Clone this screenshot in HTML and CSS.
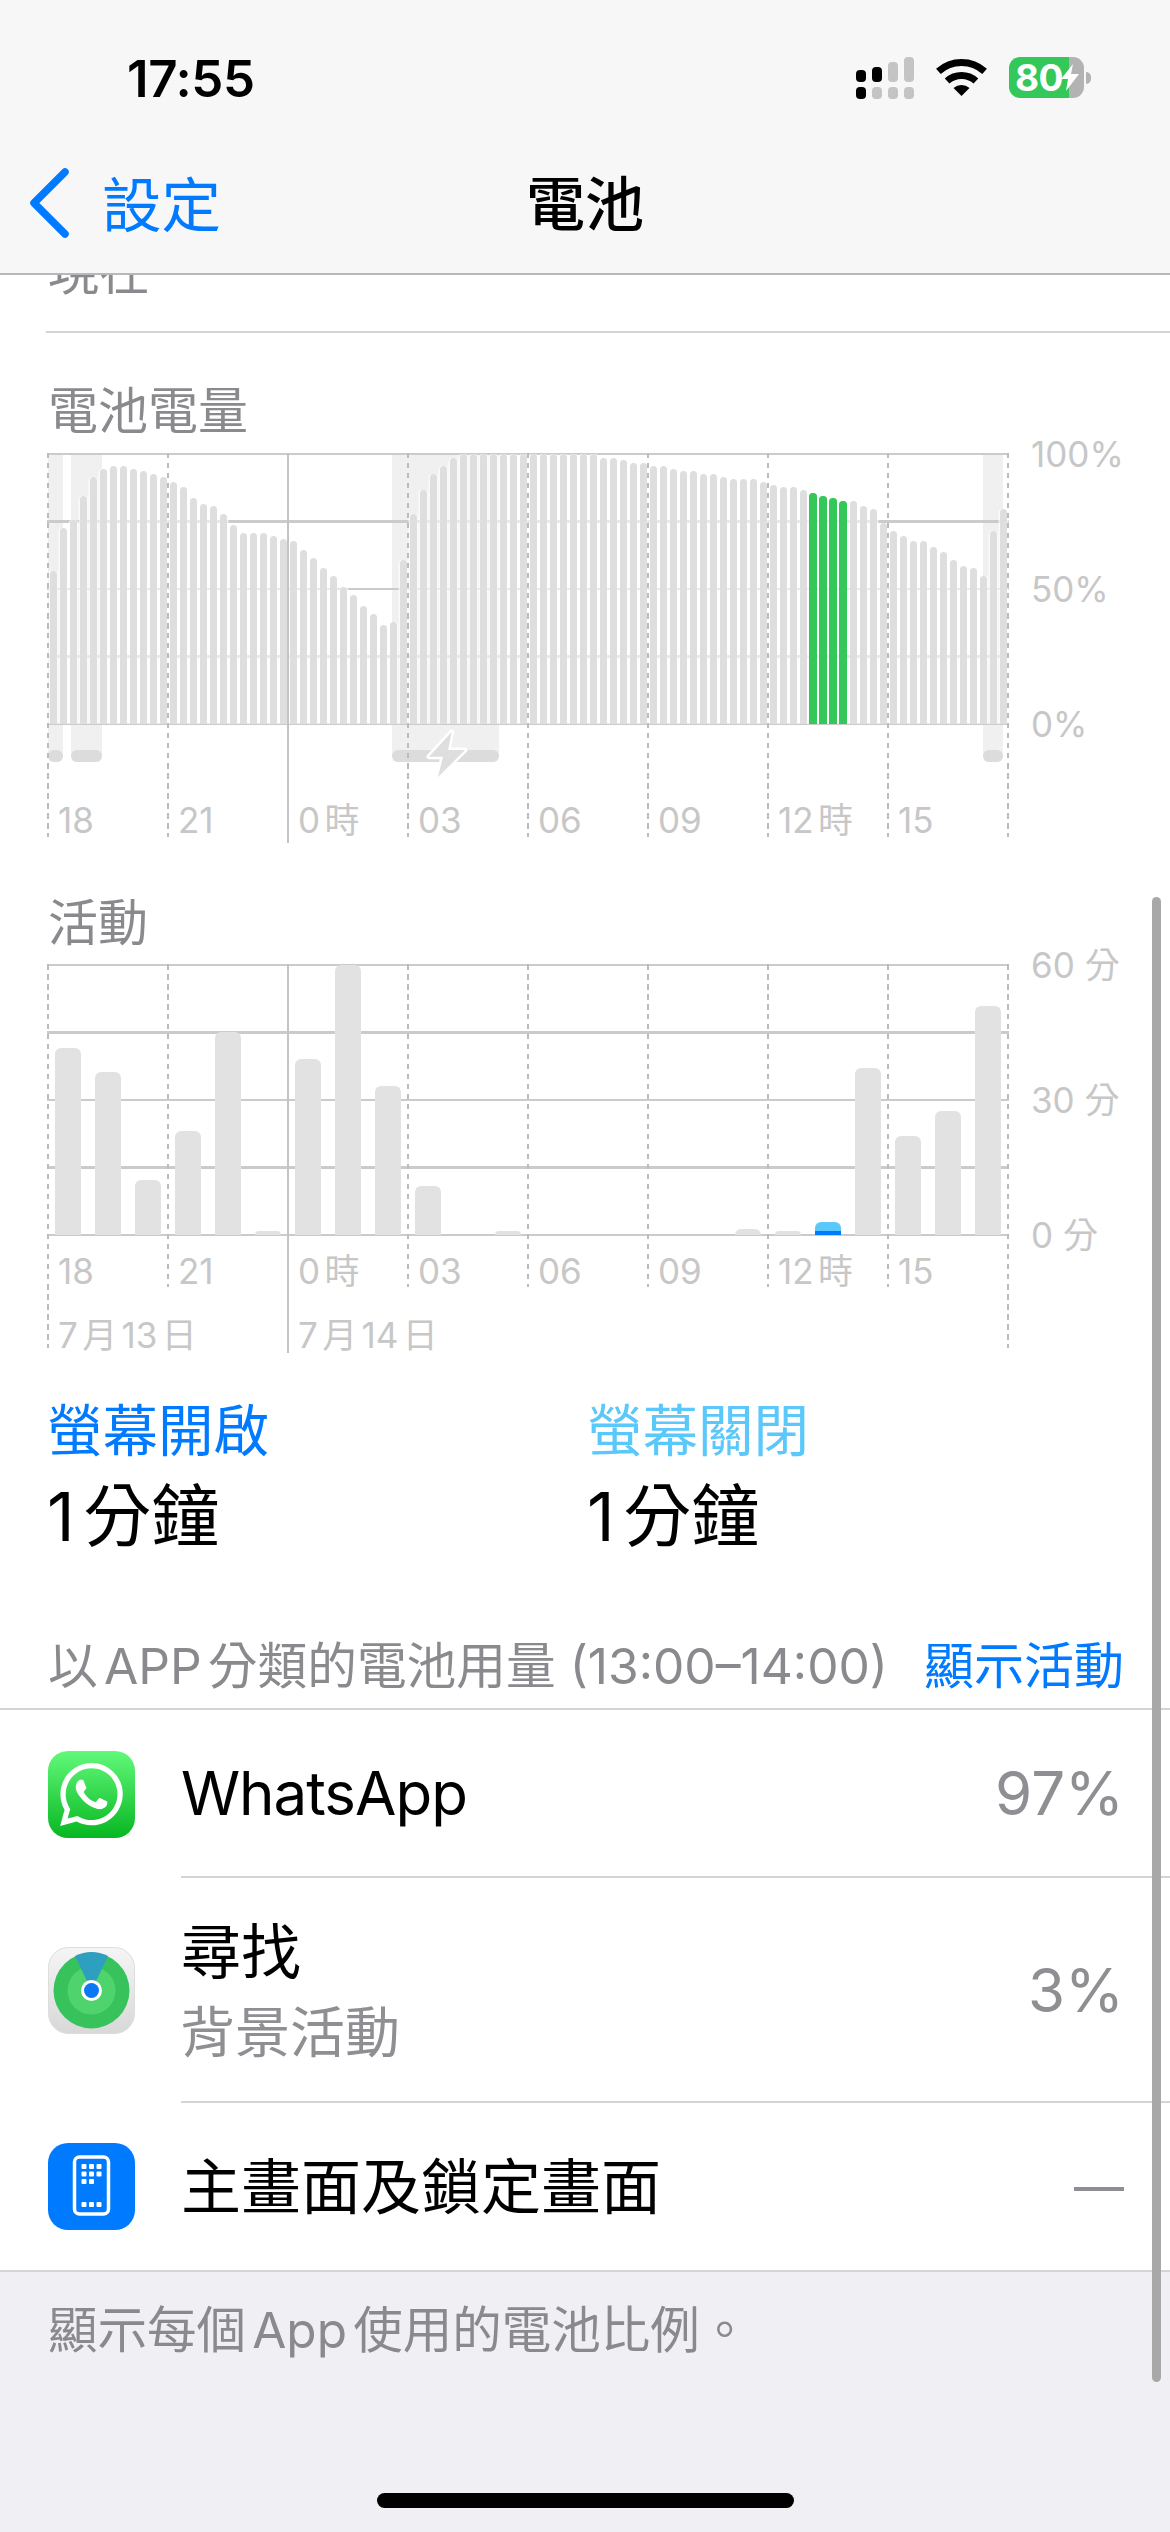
FILE: index.html
```html
<!DOCTYPE html>
<html lang="zh-Hant">
<head>
<meta charset="utf-8">
<title>電池</title>
<link rel="stylesheet" href="styles.css">
</head>
<body>
<div class="screen">

  <header class="top">
    <div class="status">
      <span class="clock">17:55</span>
      <div class="status-icons">
        <div class="signal">
          <div class="signal-col"><i class="on s1"></i><i class="on dot"></i></div>
          <div class="signal-col"><i class="on s2"></i><i class="dot"></i></div>
          <div class="signal-col"><i class="s3"></i><i class="dot"></i></div>
          <div class="signal-col"><i class="s4"></i><i class="dot"></i></div>
        </div>
        <svg class="wifi" width="51" height="37" viewBox="0 0 51 37">
          <path d="M2.4 12.4A34.5 34.5 0 0 1 48.6 12.4" fill="none" stroke="#000" stroke-width="7"/>
          <path d="M11.1 22A21.5 21.5 0 0 1 39.9 22" fill="none" stroke="#000" stroke-width="7"/>
          <path d="M25.5 37L17.5 29A12 12 0 0 1 33.5 29Z" fill="#000"/>
        </svg>
        <div class="battery">
          <div class="battery-body">
            <span class="battery-num">80</span>
            <svg class="battery-bolt" width="18" height="27" viewBox="0 0 18 27"><path d="M12 0L0 15h7L5 27 18 10h-8z" fill="#fff"/></svg>
          </div>
          <div class="battery-nub"></div>
        </div>
      </div>
    </div>
    <nav class="navbar">
      <a class="back">
        <svg width="39" height="70" viewBox="0 0 39 70"><path d="M35 4L4 35l31 31" fill="none" stroke="#007aff" stroke-width="7.5" stroke-linecap="round" stroke-linejoin="round"/></svg>
        <span>設定</span>
      </a>
      <h1 class="nav-title">電池</h1>
    </nav>
  </header>

  <main>
    <div class="now-row">現在</div>

    <h2 class="chart-title first">電池電量</h2>
    <div class="chart chart-level">
      <div class="bands" id="level-bands"></div>
      <div class="plot"><div class="bars" id="level-bars"></div></div>
      <div class="ticks">
        <div class="tick"><span class="tick-label">18</span></div>
        <div class="tick"><span class="tick-label">21</span></div>
        <div class="tick tick-day"><span class="tick-label">0時</span></div>
        <div class="tick"><span class="tick-label">03</span></div>
        <div class="tick"><span class="tick-label">06</span></div>
        <div class="tick"><span class="tick-label">09</span></div>
        <div class="tick"><span class="tick-label">12時</span></div>
        <div class="tick"><span class="tick-label">15</span></div>
        <div class="tick tick-end"></div>
      </div>
      <div class="y-axis"><span>100%</span><span>50%</span><span>0%</span></div>
      <svg class="charge-bolt" width="44" height="56" viewBox="0 0 44 56"><path d="M27.7 5L5 29.7h14L14 50l27-27H24z" fill="#dedede" stroke="#fff" stroke-width="5" stroke-linejoin="round" paint-order="stroke"/></svg>
    </div>

    <h2 class="chart-title second">活動</h2>
    <div class="chart chart-activity">
      <div class="plot"><div class="bars" id="activity-bars"></div></div>
      <div class="ticks">
        <div class="tick tick-long"><span class="tick-label">18</span><span class="date-label">7月13日</span></div>
        <div class="tick"><span class="tick-label">21</span></div>
        <div class="tick tick-day"><span class="tick-label">0時</span><span class="date-label">7月14日</span></div>
        <div class="tick"><span class="tick-label">03</span></div>
        <div class="tick"><span class="tick-label">06</span></div>
        <div class="tick"><span class="tick-label">09</span></div>
        <div class="tick"><span class="tick-label">12時</span></div>
        <div class="tick"><span class="tick-label">15</span></div>
        <div class="tick tick-end tick-long"></div>
      </div>
      <div class="y-axis"><span>60 分</span><span>30 分</span><span>0 分</span></div>
    </div>

    <section class="screen-time">
      <div class="time-col">
        <div class="time-name on">螢幕開啟</div>
        <div class="time-value">1分鐘</div>
      </div>
      <div class="time-col">
        <div class="time-name off">螢幕關閉</div>
        <div class="time-value">1分鐘</div>
      </div>
    </section>

    <div class="usage-head">
      <span>以APP分類的電池用量 (13:00–14:00)</span>
      <a class="usage-link">顯示活動</a>
    </div>

    <ul class="apps">
      <li class="app app-whatsapp">
        <svg class="app-icon" width="87" height="87" viewBox="0 0 87 87">
          <defs><linearGradient id="wa" x1="0" y1="0" x2="0" y2="1"><stop offset="0" stop-color="#62f97b"/><stop offset="1" stop-color="#07b721"/></linearGradient></defs>
          <rect width="87" height="87" rx="20" fill="url(#wa)"/>
          <path transform="translate(12 12) scale(2.62)" fill="#fff" d="M17.472 14.382c-.297-.149-1.758-.867-2.03-.967-.273-.099-.471-.148-.67.15-.197.297-.767.966-.94 1.164-.173.199-.347.223-.644.075-.297-.15-1.255-.463-2.39-1.475-.883-.788-1.48-1.761-1.653-2.059-.173-.297-.018-.458.13-.606.134-.133.298-.347.446-.52.149-.174.198-.298.298-.497.099-.198.05-.371-.025-.52-.075-.149-.669-1.612-.916-2.207-.242-.579-.487-.5-.669-.51-.173-.008-.371-.01-.57-.01-.198 0-.52.074-.792.372-.272.297-1.04 1.016-1.04 2.479 0 1.462 1.065 2.875 1.213 3.074.149.198 2.096 3.2 5.077 4.487.709.306 1.262.489 1.694.625.712.227 1.36.195 1.871.118.571-.085 1.758-.719 2.006-1.413.248-.694.248-1.289.173-1.413-.074-.124-.272-.198-.57-.347m-5.421 7.403h-.004a9.87 9.87 0 01-5.031-1.378l-.361-.214-3.741.982.998-3.648-.235-.374a9.86 9.86 0 01-1.51-5.26c.001-5.45 4.436-9.884 9.888-9.884 2.64 0 5.122 1.03 6.988 2.898a9.825 9.825 0 012.893 6.994c-.003 5.45-4.437 9.884-9.885 9.884m8.413-18.297A11.815 11.815 0 0012.05 0C5.495 0 .16 5.335.157 11.892c0 2.096.547 4.142 1.588 5.945L.057 24l6.305-1.654a11.882 11.882 0 005.683 1.448h.005c6.554 0 11.89-5.335 11.893-11.893a11.821 11.821 0 00-3.48-8.413z"/>
        </svg>
        <div class="app-body">
          <div class="app-name latin">WhatsApp</div>
          <div class="app-pct">97%</div>
        </div>
      </li>
      <li class="app app-find">
        <svg class="app-icon" width="87" height="87" viewBox="0 0 87 87">
          <defs><linearGradient id="fm" x1="0" y1="0" x2="0" y2="1"><stop offset="0" stop-color="#f5f5f5"/><stop offset="1" stop-color="#d8d8d8"/></linearGradient></defs>
          <rect x=".5" y=".5" width="86" height="86" rx="20" fill="url(#fm)" stroke="#ddd"/>
          <circle cx="43.5" cy="43.5" r="38" fill="#38c25c"/>
          <circle cx="43.5" cy="43.5" r="24" fill="#4fd36c"/>
          <path d="M27 9A38 38 0 0 1 60 9L43.5 43.5Z" fill="#2f9fc0"/>
          <circle cx="43.5" cy="43.5" r="10.5" fill="#fff"/>
          <circle cx="43.5" cy="43.5" r="7.5" fill="#0a78f5"/>
        </svg>
        <div class="app-body">
          <div class="app-text">
            <div class="app-name">尋找</div>
            <div class="app-sub">背景活動</div>
          </div>
          <div class="app-pct">3%</div>
        </div>
      </li>
      <li class="app app-home">
        <svg class="app-icon" width="87" height="87" viewBox="0 0 87 87">
          <rect width="87" height="87" rx="20" fill="#007aff"/>
          <rect x="26.5" y="14" width="34" height="57" rx="5" fill="none" stroke="#fff" stroke-width="3.5"/>
          <g fill="#fff">
            <rect x="33.5" y="21" width="5" height="5" rx="1"/><rect x="41" y="21" width="5" height="5" rx="1"/><rect x="48.5" y="21" width="5" height="5" rx="1"/>
            <rect x="33.5" y="28.5" width="5" height="5" rx="1"/><rect x="41" y="28.5" width="5" height="5" rx="1"/><rect x="48.5" y="28.5" width="5" height="5" rx="1"/>
            <rect x="33.5" y="36" width="5" height="5" rx="1"/><rect x="41" y="36" width="5" height="5" rx="1"/>
            <rect x="33.5" y="59" width="5" height="5" rx="1"/><rect x="41" y="59" width="5" height="5" rx="1"/><rect x="48.5" y="59" width="5" height="5" rx="1"/>
          </g>
        </svg>
        <div class="app-body">
          <div class="app-name">主畫面及鎖定畫面</div>
          <div class="app-pct app-dash">—</div>
        </div>
      </li>
    </ul>

    <footer class="note">顯示每個App使用的電池比例。</footer>
  </main>

  <div class="scrollbar"></div>
  <div class="home-bar"></div>
</div>
<script src="charts.js"></script>
</body>
</html>
```

FILE: styles.css
```css
* { box-sizing: border-box; }

html, body { margin: 0; padding: 0; }

body {
  width: 1170px;
  height: 2532px;
  overflow: hidden;
  background: #fff;
  color: #000;
  font-family: Inter, "Noto Sans CJK TC", sans-serif;
  text-autospace: normal;
}

.screen { position: relative; width: 1170px; height: 2532px; overflow: hidden; display: flex; flex-direction: column; }

h1, h2, ul { margin: 0; padding: 0; font-weight: 400; }
ul { list-style: none; }

/* top bar */
.top {
  position: relative;
  z-index: 5;
  height: 275px;
  flex: none;
  background: #f7f7f7;
  border-bottom: 2px solid #b8b8b8;
}

.status {
  height: 157px;
  padding: 56px 79px 0 127px;
  display: flex;
  justify-content: space-between;
  align-items: flex-start;
}

.clock { font-size: 51px; font-weight: 600; line-height: 46px; letter-spacing: -.4px; }

.status-icons { display: flex; align-items: flex-start; }

.signal { display: flex; gap: 6.3px; width: 58px; height: 42px; margin-top: 1px; margin-right: 22px; align-items: flex-end; }
.signal-col { display: flex; flex-direction: column; gap: 5px; width: 10px; }
.signal-col i { display: block; background: #c4c4c4; border-radius: 4px; }
.signal-col i.on { background: #000; }
.signal-col .dot { height: 11.6px; }
.signal-col .s1 { height: 12px; }
.signal-col .s2 { height: 15px; }
.signal-col .s3 { height: 20px; }
.signal-col .s4 { height: 25px; }

.wifi { margin-top: 3px; margin-right: 22px; }

.battery { display: flex; align-items: center; height: 41px; margin-top: 1px; }
.battery-body {
  width: 75px;
  height: 41px;
  border-radius: 11px;
  background: linear-gradient(to right, #34c759 0 60px, #b3b3b3 60px);
  display: flex;
  align-items: center;
  padding-left: 6px;
}
.battery-num { color: #fff; font-size: 37px; font-weight: 700; line-height: 41px; letter-spacing: -.5px; width: 46px; }
.battery-bolt { flex: none; }
.battery-nub { width: 5px; height: 12px; margin-left: 2px; background: #b3b3b3; border-radius: 0 6px 6px 0; }

.navbar { position: relative; height: 116px; display: flex; align-items: flex-start; }

.back { display: flex; align-items: flex-start; color: #007aff; font-size: 59.5px; line-height: 70px; padding: 11px 0 0 30px; }
.back span { margin-left: 33px; margin-top: 2px; }

.nav-title {
  position: absolute;
  left: 0;
  right: 0;
  top: 13px;
  text-align: center;
  font-size: 59px;
  line-height: 70px;
  font-weight: 500;
}

/* scrolled row under the bar */
main { flex: 1; display: flex; flex-direction: column; }

.now-row {
  height: 110px;
  margin: -52px 0 0 46px;
  padding: 0 0 29px 2px;
  display: flex;
  align-items: flex-end;
  border-bottom: 2px solid #d4d4d6;
  color: #8a8a8e;
  font-size: 51px;
  line-height: 60px;
}

/* charts */
.chart-title { margin-left: 48px; font-size: 50px; line-height: 60px; color: #8a8a8e; }
.chart-title.first { margin-top: 48px; margin-bottom: 12px; }
.chart-title.second { margin-top: 50px; margin-bottom: 11px; }

.chart { position: relative; margin-left: 47px; width: 1100px; }
.chart-level { height: 390px; }
.chart-activity { height: 389px; }

.plot {
  position: relative;
  width: 962px;
  height: 272px;
  background: repeating-linear-gradient(to bottom, #cbcbcb 0 2px, transparent 2px 67.5px);
}

.bars { display: flex; align-items: flex-end; position: absolute; left: 1px; bottom: 1px; height: 270px; }
.bar-cell { display: flex; align-items: flex-end; justify-content: center; height: 100%; }
.chart-level .bar-cell { width: 10px; }
.chart-activity .bar-cell { width: 40px; }

.bar { display: flex; flex-direction: column; justify-content: flex-end; background: #dedede; }
/* the slim gaps between level bars wash out the grid lines behind them */
.chart-level .bar {
  width: 7px;
  border-radius: 3.5px 3.5px 0 0;
  box-shadow: 1.5px 0 0 rgba(255, 255, 255, .65), -1.5px 0 0 rgba(255, 255, 255, .65);
}
.chart-level .bar.current { width: 8px; background: #34c759; }
.chart-activity .bar { width: 26px; border-radius: 6px 6px 0 0; background: #e2e2e2; overflow: hidden; }
.chart-activity .bar.current { background: #5ac8fa; }
.bar-on { display: block; background: #007aff; }

/* charging periods */
.bands { position: absolute; inset: 0; }
.band { position: absolute; top: 1px; height: 308px; background: #f0f0f0; border-radius: 0 0 6px 6px; }
.band::after {
  content: "";
  position: absolute;
  left: 0;
  right: 0;
  bottom: 0;
  height: 12px;
  background: #dcdcdc;
  border-radius: 6px;
}

.charge-bolt { position: absolute; left: 377px; top: 274px; }

.ticks { position: absolute; inset: 0; display: flex; align-items: flex-start; }

.tick {
  flex: 0 0 120px;
  min-width: 0;
  height: 384px;
  padding-left: 11px;
  background: repeating-linear-gradient(to bottom, #bcbcbc 0 5.5px, transparent 5.5px 10px) left top / 2px 100% no-repeat;
}
.tick-end { flex: 0 0 2px; padding: 0; }
.tick-day { height: 390px; background: linear-gradient(#c4c4c4, #c4c4c4) left top / 2px 100% no-repeat; }

.tick-label, .date-label {
  display: block;
  color: #c7c7c7;
  font-size: 35px;
  line-height: 40px;
  white-space: nowrap;
}
.chart-level .tick-label { margin-top: 347px; }
.chart-activity .tick { height: 323px; }
.chart-activity .tick-long { height: 384px; }
.chart-activity .tick-day { height: 389px; }
.chart-activity .tick-label { margin-top: 287px; }
.date-label { margin-top: 24px; }

.y-axis {
  position: absolute;
  left: 984px;
  top: -19px;
  height: 310px;
  display: flex;
  flex-direction: column;
  justify-content: space-between;
  color: #c7c7c7;
  font-size: 35px;
  line-height: 40px;
  white-space: nowrap;
}

/* screen on and off */
.screen-time { display: flex; margin: 46px 0 0 47px; }
.time-col { width: 540px; }
.time-name { font-size: 55.5px; line-height: 64px; }
.time-name.on { color: #007aff; }
.time-name.off { color: #5ac8fa; }
.time-value { margin-top: 18px; font-size: 68px; line-height: 70px; }

/* usage by app */
.usage-head {
  display: flex;
  justify-content: space-between;
  margin-top: 85px;
  padding: 0 46px 12px 48px;
  border-bottom: 2px solid #d4d4d6;
  color: #8a8a8e;
  font-size: 49.7px;
  line-height: 60px;
  white-space: nowrap;
}
.usage-link { color: #007aff; font-size: 50px; }

.app { display: flex; align-items: center; padding-left: 48px; }
.app-whatsapp { height: 168px; }
.app-find { height: 225px; }
.app-home { height: 167px; }

.app-icon { flex: none; }

.app-body {
  flex: 1;
  align-self: stretch;
  margin-left: 46px;
  padding-right: 46px;
  display: flex;
  align-items: center;
  justify-content: space-between;
  border-bottom: 2px solid #d4d4d6;
}
.app-home .app-body { border-bottom: 0; }

.app-name { font-size: 60px; line-height: 72px; }
.app-name.latin { letter-spacing: -1px; }
.app-sub { margin-top: 12px; margin-left: -1px; font-size: 55px; line-height: 64px; color: #8e8e93; }
.app-pct { font-size: 60px; line-height: 72px; color: #8e8e93; }
.app-dash { font-size: 50px; }

.note {
  flex: 1;
  padding: 28px 48px 0;
  background: #efeff4;
  border-top: 2px solid #d4d4d6;
  color: #8a8a8e;
  font-size: 49.5px;
  line-height: 60px;
}

/* overlays */
.scrollbar {
  position: absolute;
  left: 1152px;
  top: 897px;
  width: 9px;
  height: 1485px;
  border-radius: 5px;
  background: #a8a8a8;
}

.home-bar {
  position: absolute;
  left: 377px;
  top: 2493px;
  width: 417px;
  height: 15px;
  border-radius: 8px;
  background: #000;
}
```

FILE: charts.js
```js
// battery level every 15 minutes, percent
var levels = [
  56.5, 72.6, 75.7, 84.3, 91.4, 94.4, 95.6, 95.6, 94.4, 93.7, 92.6, 91.5,
  89.6, 87.8, 83.7, 81.5, 80.7, 77.8, 73.7, 70.7, 70.7, 70.7, 69.6, 68.5,
  67.8, 64.4, 61.5, 57.8, 54.7, 50.7, 47.8, 43.7, 40.7, 36.7, 37.8, 60.6,
  77.8, 86.7, 92.6, 95.6, 98.5, 100, 100, 100, 100, 100, 100, 100,
  100, 100, 100, 100, 100, 100, 100, 98.5, 98.5, 97.8, 96.7, 96.7, 95.6, 95.6,
  94.4, 93.7, 93.7, 92.6, 92.6, 91.5, 90.7, 90.7, 90.7, 89.6, 88.5, 87.8,
  87.8, 86.7, 85.6, 84.4, 83.7, 82.6, 82.6, 80.7, 79.6, 74.4, 71.5, 69.6,
  67.8, 67.8, 65.6, 63.7, 60.7, 58.5, 57.8, 54.7, 71.4, 79.6
];

// minutes of activity per hour
var activity = [
  41.5, 36.2, 12.2, 23.1, 45.1, 0.8, 39.1, 60, 33.1, 10.8, 0, 0.8,
  0, 0, 0, 0, 0, 1.3, 0.8, 2.8, 37.1, 22, 27.5, 50.9
];

// charging periods as [left, width] in chart pixels
var charging = [[1, 14.5], [23.8, 31], [345, 106.6], [935.5, 20.7]];

var PLOT_H = 270;

function addBar(parent, height, current) {
  var cell = document.createElement('div');
  cell.className = 'bar-cell';
  var bar = document.createElement('div');
  bar.className = current ? 'bar current' : 'bar';
  bar.style.height = height + 'px';
  cell.appendChild(bar);
  parent.appendChild(cell);
  return bar;
}

var levelBars = document.getElementById('level-bars');
levels.forEach(function (v, i) {
  addBar(levelBars, v / 100 * PLOT_H, i >= 76 && i <= 79);
});

var activityBars = document.getElementById('activity-bars');
activity.forEach(function (v, i) {
  var bar = addBar(activityBars, v / 60 * PLOT_H, i === 19);
  if (i === 19) {
    var on = document.createElement('span');
    on.className = 'bar-on';
    on.style.height = '3.7px';
    bar.appendChild(on);
  }
});

var bands = document.getElementById('level-bands');
charging.forEach(function (c) {
  var band = document.createElement('div');
  band.className = 'band';
  band.style.left = c[0] + 'px';
  band.style.width = c[1] + 'px';
  bands.appendChild(band);
});
```
